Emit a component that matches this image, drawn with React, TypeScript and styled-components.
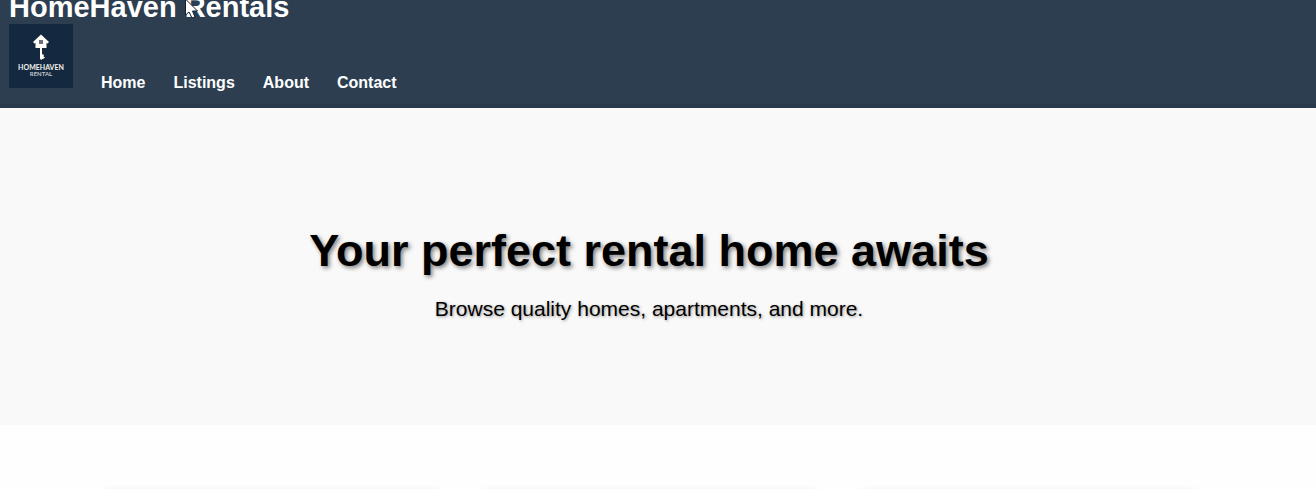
import React from "react";
import styled, { createGlobalStyle } from "styled-components";

const GlobalStyle = createGlobalStyle`
  * { box-sizing: border-box; }
  html { overflow: hidden; }
  body {
    margin: 0;
    background: #fefefe;
    color: #000;
    font-family: Arial, "Liberation Sans", sans-serif;
  }
`;

const Header = styled.header`
  position: relative;
  padding: 0 9px 16px;
  background: #2c3e50;
  border-bottom: 4px solid #28394b;
  color: #fff;
`;

const Brand = styled.h1`
  height: 24px;
  margin: 0;
  font-size: 29px;
  line-height: 14px;
  white-space: nowrap;
`;

const Bar = styled.div`
  display: flex;
  align-items: flex-end;
  gap: 28px;
`;

const Logo = styled.svg`
  display: block;
  width: 64px;
  height: 64px;
`;

const Nav = styled.nav`
  display: flex;
  gap: 28px;
`;

const NavLink = styled.a`
  color: #fff;
  font-size: 16px;
  font-weight: bold;
  line-height: 10px;
  text-decoration: none;
`;

const Pointer = styled.svg`
  position: absolute;
  top: 0;
  left: 184px;
  width: 16px;
  height: 20px;
`;

const Hero = styled.section`
  padding: 117px 18px 104px 0;
  background: #f9f9f9;
  text-align: center;
`;

const HeroTitle = styled.h2`
  margin: 0 0 20px;
  font-size: 45px;
  line-height: 52px;
  text-shadow: 2px 2px 4px rgba(0, 0, 0, 0.5);
`;

const HeroText = styled.p`
  margin: 0;
  font-size: 21px;
  line-height: 24px;
  text-shadow: 1px 1px 3px rgba(0, 0, 0, 0.4);
`;

const Listings = styled.section`
  display: grid;
  grid-template-columns: repeat(3, 1fr);
  gap: 40px;
  padding: 65px 118px 0 102px;
`;

const Card = styled.article`
  min-height: 320px;
  border-radius: 8px;
  background: #fff;
  box-shadow: 0 2px 8px rgba(0, 0, 0, 0.12);
`;

const links = ["Home", "Listings", "About", "Contact"];

export default function App() {
  return (
    <>
      <GlobalStyle />
      <Header>
        <Brand>HomeHaven Rentals</Brand>
        <Bar>
          <Logo viewBox="0 0 64 64" role="img" aria-label="HomeHaven Rental">
            <rect width="64" height="64" fill="#14283f" />
            <path d="M32 10.500 L40 18 L38.500 19.500 L37.500 19 V24 H26.500 V19 L25.500 19.500 L24 18 Z" fill="#fffdf6" />
            <rect x="30" y="16" width="4" height="4" fill="#68727b" />
            <path d="M31 24 H33 V30 L35 31 L34.500 32.500 L36 33.500 L34 35 H33 V36 L31 35 Z" fill="#fffdf6" />
            <text x="32" y="46" textAnchor="middle" fill="#f5f3ee" fontFamily="Lato, sans-serif" fontSize="7" fontWeight="700">HOMEHAVEN</text>
            <text x="32" y="52" textAnchor="middle" fill="#c3c8cc" fontFamily="Lato, sans-serif" fontSize="6" fontWeight="700">RENTAL</text>
          </Logo>
          <Nav aria-label="Main">
            {links.map((label) => (
              <NavLink key={label} href={`#${label.toLowerCase()}`}>{label}</NavLink>
            ))}
          </Nav>
        </Bar>
        <Pointer viewBox="0 0 16 20" aria-hidden="true">
          <path d="M1.500 -1 V15 L5 12 L8 18 L11 17 L8.500 11 H13.500 Z" fill="#fff" stroke="#14202c" strokeWidth="1" />
        </Pointer>
      </Header>
      <main>
        <Hero>
          <HeroTitle>Your perfect rental home awaits</HeroTitle>
          <HeroText>Browse quality homes, apartments, and more.</HeroText>
        </Hero>
        <Listings aria-label="Listings">
          <Card />
          <Card />
          <Card />
        </Listings>
      </main>
    </>
  );
}
